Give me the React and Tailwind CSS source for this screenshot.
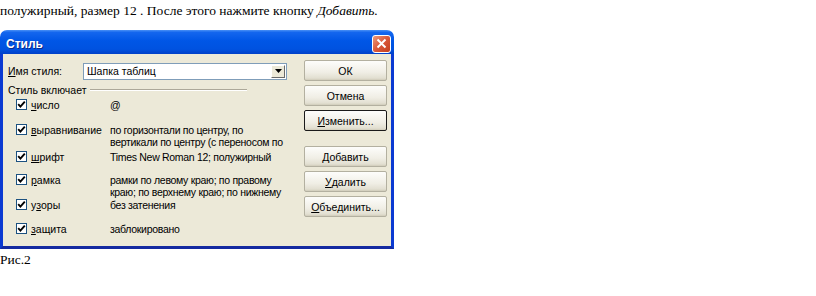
import React from "react";

const Check = () => (
  <span className="w-[11px] h-[11px] border border-[#1c5180] bg-white flex items-center justify-center shrink-0">
    <svg width="9" height="9" viewBox="0 0 9 9">
      <path d="M1.2 4.2 L3.4 6.6 L7.8 1.6" stroke="#000" strokeWidth="1.9" fill="none" />
    </svg>
  </span>
);

const U = ({ text, i }) => (
  <>
    {text.slice(0, i)}
    <span className="underline">{text[i]}</span>
    {text.slice(i + 1)}
  </>
);

const rows = [
  { label: "число", u: 0, desc: ["@"], h: "h-[25px]" },
  { label: "выравнивание", u: 0, desc: ["по горизонтали по центру, по", "вертикали по центру (с переносом по"], h: "h-[27px]" },
  { label: "шрифт", u: 0, desc: ["Times New Roman 12; полужирный"], h: "h-[23px]" },
  { label: "рамка", u: 0, desc: ["рамки по левому краю; по правому", "краю; по верхнему краю; по нижнему"], h: "h-[25px]" },
  { label: "узоры", u: 1, desc: ["без затенения"], h: "h-[24px]" },
  { label: "защита", u: 0, desc: ["заблокировано"], h: "h-[24px]" },
];

const Btn = ({ children, def, mt = "" }) => (
  <div
    className={`${mt} w-[83px] h-[21px] rounded-[2px] border ${
      def ? "border-[#1a1a1a]" : "border-[#b3b0a0]"
    } bg-[linear-gradient(to_bottom,#fdfdfb,#f0eee5_60%,#e2dfd1_90%,#d0ccba)] flex items-center justify-center text-black`}
  >
    {children}
  </div>
);

export default function App() {
  return (
    <div className="w-[816px] h-[296px] bg-white overflow-hidden font-['Liberation_Serif',serif] text-black">
      <p className="text-[13.5px] leading-[22px] whitespace-nowrap">
        полужирный, размер 12 . После этого нажмите кнопку <i>Добавить.</i>
      </p>
      <div className="mt-[8px] w-[394px] font-['Liberation_Sans',sans-serif] text-[10.5px] leading-[12px]">
        <div className="h-[24px] rounded-t-[7px] bg-[linear-gradient(to_bottom,#4a90f5_0%,#1466ee_10%,#0056e6_45%,#0052e0_80%,#0040c8_100%)] flex items-center justify-between pl-[6px] pr-[3px]">
          <span className="text-white font-bold text-[12px] pt-[3px] [text-shadow:1px_1px_0_#0a2a8a]">Стиль</span>
          <span className="mt-[3px] w-[19px] h-[18px] rounded-[3px] border border-white bg-[linear-gradient(135deg,#ec9a7c,#d9583a_50%,#c43e1c)] flex items-center justify-center">
            <svg width="11" height="11" viewBox="0 0 11 11">
              <path d="M1.5 1.5 L9.5 9.5 M9.5 1.5 L1.5 9.5" stroke="#fff" strokeWidth="2" />
            </svg>
          </span>
        </div>
        <div className="h-[195px] bg-[#ece9d8] border-x-[3px] border-b-[3px] border-x-[#0b3ad2] border-b-[#142aa0] flex">
          <div className="w-[301px] pt-[9px]">
            <div className="flex items-center h-[16px]">
              <span className="pl-[5px] w-[80px]">
                <U text="Имя стиля:" i={0} />
              </span>
              <div className="w-[204px] h-[17px] border border-[#7f9db9] bg-white flex items-center justify-between pl-[3px] pr-[1px]">
                <span>Шапка таблиц</span>
                <span className="w-[14px] h-[13px] bg-[#ece9d8] border border-t-white border-l-white border-b-[#6a6a6a] border-r-[#6a6a6a] flex items-center justify-center">
                  <svg width="7" height="4" viewBox="0 0 7 4">
                    <path d="M0 0 H7 L3.5 4 Z" fill="#000" />
                  </svg>
                </span>
              </div>
            </div>
            <div className="mt-[5px] h-[12px] w-[244px] flex items-center">
              <span className="pl-[5px] pr-[4px] whitespace-nowrap">Стиль включает</span>
              <span className="flex-1 h-[2px] border-t border-t-[#aca899] border-b border-b-white" />
            </div>
            <div className="mt-[3px] flex flex-col">
              {rows.map((r) => (
                <div key={r.label} className={`${r.h} flex items-start`}>
                  <div className="pl-[13px] w-[107px] flex items-start">
                    <Check />
                    <span className="pl-[4px] whitespace-nowrap">
                      <U text={r.label} i={r.u} />
                    </span>
                  </div>
                  <div className="w-[190px] whitespace-nowrap tracking-[-0.3px]">
                    {r.desc.map((d) => (
                      <div key={d}>{d}</div>
                    ))}
                  </div>
                </div>
              ))}
            </div>
          </div>
          <div className="w-[83px] pt-[6px] flex flex-col">
            <Btn>ОК</Btn>
            <Btn mt="mt-[4px]">Отмена</Btn>
            <Btn mt="mt-[4px]" def>
              <U text="Изменить..." i={0} />
            </Btn>
            <Btn mt="mt-[15px]">
              <U text="Добавить" i={0} />
            </Btn>
            <Btn mt="mt-[4px]">
              <U text="Удалить" i={0} />
            </Btn>
            <Btn mt="mt-[4px]">
              <U text="Объединить..." i={0} />
            </Btn>
          </div>
        </div>
      </div>
      <p className="text-[13.5px] leading-[22px]">Рис.2</p>
    </div>
  );
}
